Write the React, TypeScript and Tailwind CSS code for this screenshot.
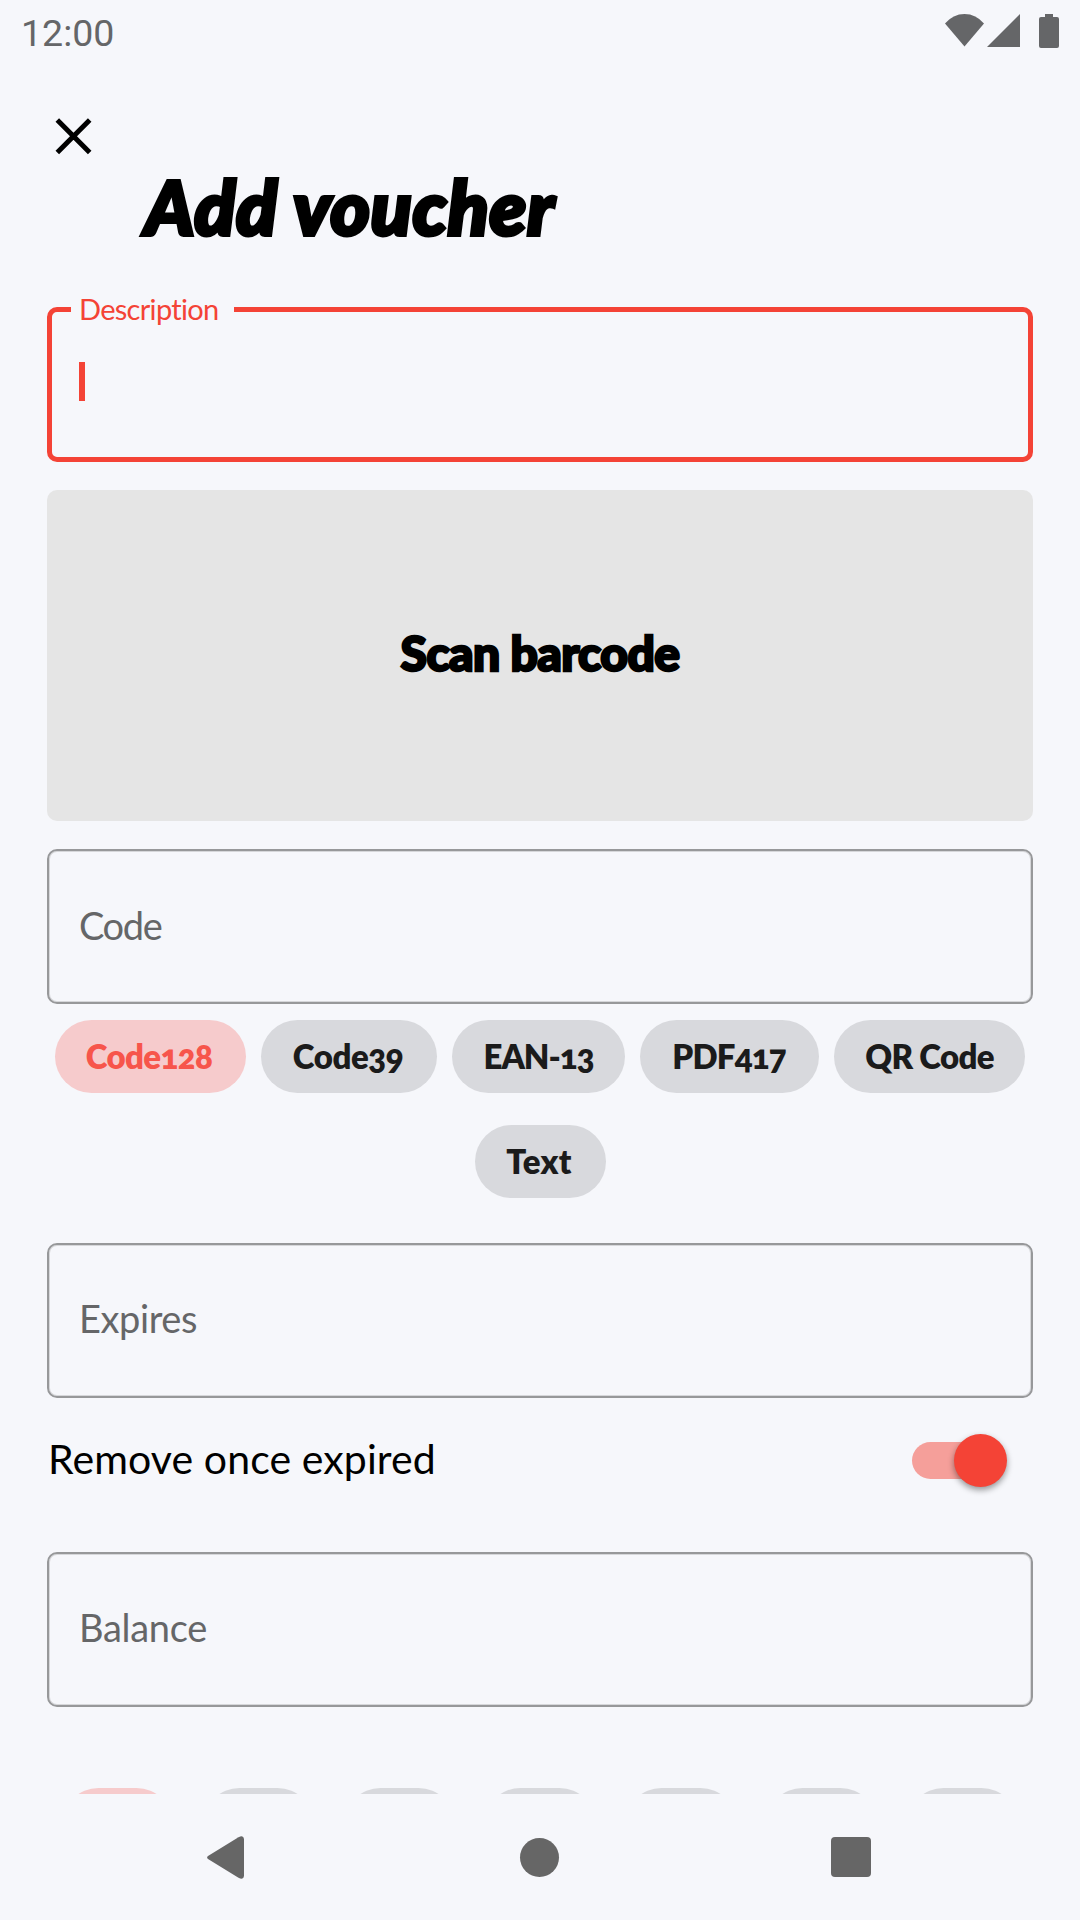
import type { ReactNode } from "react";

const codeTypes = [
  { name: "Code128", box: "w-[191px]", text: "tracking-[-0.6px] pr-[3px]", active: true },
  { name: "Code39", box: "w-[176px]", text: "tracking-[-0.4px] pr-[2px]" },
  { name: "EAN-13", box: "w-[173px]", text: "tracking-[-1px]" },
  { name: "PDF417", box: "w-[179px]", text: "tracking-[-0.8px] pr-[1px]" },
  { name: "QR Code", box: "w-[191px]", text: "tracking-[-0.7px]" },
  { name: "Text", box: "w-[131px]", text: "tracking-[0.3px] pr-[2px]" },
];

function Field({ label, className }: { label: ReactNode; className: string }) {
  return (
    <div
      className={`flex h-[155px] w-full shrink-0 items-center rounded-[10px] border-2 border-[#97989a] text-[38px] leading-none text-[#656668] shadow-[inset_0_0_0_1px_#d6d7da] ${className}`}
    >
      {label}
    </div>
  );
}

export default function App() {
  return (
    <div className="flex h-[1920px] w-[1080px] flex-col overflow-hidden bg-[#f6f7fb] font-['Lato',sans-serif] text-black">
      <header className="flex h-[60px] shrink-0 items-start justify-between pr-[21px] pl-[21px]">
        <span className="mt-[12px] font-['Roboto',sans-serif] text-[37.5px] leading-[43px] text-[#656668]">12:00</span>
        <svg className="mt-[13px] h-[36px] w-[115px]" viewBox="944 13 115 36" fill="#656668">
          <path d="M945 23.5Q953 14 964.5 14T984 23.5L964.5 46.5Z" />
          <path d="M1020 14V47H987Z" />
          <path d="M1045 14H1053V17H1057Q1059 17 1059 19V46Q1059 48 1057 48H1041Q1039 48 1039 46V19Q1039 17 1041 17H1045Z" />
        </svg>
      </header>

      <main className="flex h-[1734px] shrink-0 flex-col overflow-hidden px-[47px]">
        <button className="mt-[57px] ml-[8px] h-[39px] w-[39px] shrink-0" aria-label="Close">
          <svg viewBox="0 0 39 39" className="h-[39px] w-[39px]" stroke="#000" strokeWidth="5">
            <path d="M2.3 3L34.7 35.4M34.7 3L2.3 35.4" />
          </svg>
        </button>
        <h1 className="mt-[12px] ml-[98px] h-[76px] shrink-0 font-['Lato_Black','Lato',sans-serif] text-[75px] leading-[76px] font-black tracking-[1px] whitespace-nowrap italic [-webkit-text-stroke:4px_#000]">
          Add voucher
        </h1>

        <div className="relative mt-[63px] h-[155px] shrink-0 rounded-[10px] border-[5px] border-[#f44336]">
          <span className="absolute -top-[18px] left-[19px] h-[30px] w-[163px] bg-[#f6f7fb] pl-[8px] text-[29px] leading-[30px] tracking-[-0.7px] text-[#f44336] [font-variant-ligatures:none]">
            Description
          </span>
          <div className="mt-[50px] ml-[27px] h-[39px] w-[6px] bg-[#f44336]" />
        </div>

        <button className="mt-[28px] flex h-[331px] shrink-0 items-center justify-center rounded-[10px] bg-[#e5e5e5] pb-[5px] font-['Lato_Black','Lato',sans-serif] text-[48px] leading-none font-black tracking-[-0.6px] [-webkit-text-stroke:2.5px_#000]">
          Scan barcode
        </button>

        <Field label="Code" className="mt-[28px] pb-[3px] pl-[30px] tracking-[-1.4px]" />

        <div className="mt-[16px] flex shrink-0 flex-wrap justify-center gap-x-[15px] gap-y-[32px]">
          {codeTypes.map((t) => (
            <button
              key={t.name}
              className={`flex h-[73px] shrink-0 items-center justify-center rounded-full text-[33px] leading-none font-extrabold whitespace-nowrap [font-feature-settings:'onum'] ${t.box} ${t.text} ${
                t.active ? "bg-[#f6cbcc] text-[#f7554b]" : "bg-[#d8d9dd] text-[#1b1b1b]"
              }`}
            >
              {t.name}
            </button>
          ))}
        </div>

        <Field label="Expires" className="mt-[45px] pb-[5px] pl-[30px] tracking-[-0.4px]" />

        <div className="mt-[28px] flex h-[68px] shrink-0 items-center justify-between">
          <span className="pb-[4px] pl-[1px] text-[41px] leading-none tracking-[0.1px]">Remove once expired</span>
          <div className="mr-[26px] flex h-[54px] w-[95px] items-center">
            <div className="flex h-[37px] w-[80px] items-center rounded-full bg-[#f59f9a]">
              <div className="ml-[42px] h-[53px] w-[53px] shrink-0 rounded-full bg-[#f44336] shadow-[0_3px_6px_rgba(0,0,0,0.4)]" />
            </div>
          </div>
        </div>

        <Field label="Balance" className="mt-[58px] pb-[5px] pl-[30px] tracking-[-0.3px]" />

        <div className="mt-[81px] ml-[15px] flex shrink-0 gap-[29.4px]">
          {[0, 1, 2, 3, 4, 5, 6].map((i) => (
            <div key={i} className={`h-[73px] w-[111.4px] shrink-0 rounded-full ${i === 0 ? "bg-[#f6cbcc]" : "bg-[#d8d9dd]"}`} />
          ))}
        </div>
      </main>

      <nav className="flex h-[126px] shrink-0 items-center justify-between pr-[209px] pl-[207px]">
        <svg className="h-[43px] w-[37px]" viewBox="0 0 37 43" fill="#666">
          <path d="M31.5 1.2Q36.5-1.5 37 3V40Q36.500 44.500 31.500 41.800L1 23Q-.8 21.500 1 20Z" />
        </svg>
        <div className="ml-[4px] h-[39px] w-[39px] rounded-full bg-[#666]" />
        <div className="h-[40px] w-[40px] rounded-[4px] bg-[#666]" />
      </nav>
    </div>
  );
}
